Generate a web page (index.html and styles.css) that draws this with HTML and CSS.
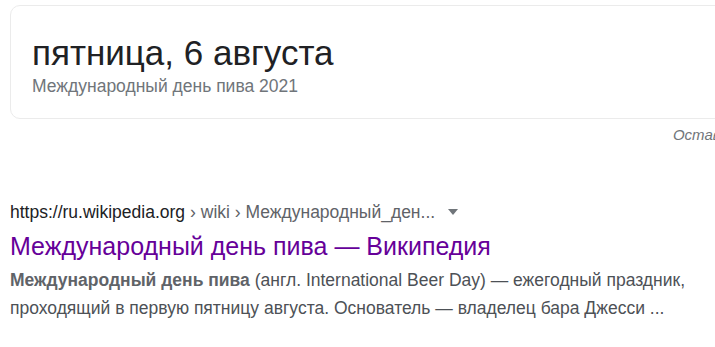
FILE: index.html
```html
<!DOCTYPE html>
<html lang="ru">
<head>
  <meta charset="UTF-8" />
  <title>Международный день пива</title>
  <link rel="stylesheet" href="styles.css">
</head>
<body>
  <div class="page">
    <div class="date-card">
      <div class="date-title">пятница, 6 августа</div>
      <div class="date-sub">Международный день пива 2021</div>
    </div>
    <div class="feedback">Оставить отзыв</div>
  </div>

  <div class="result">
    <div class="result-url">
      <span class="host">https://ru.wikipedia.org</span>
      <span class="crumbs">› wiki › Международный_ден...</span>
      <span class="caret"></span>
    </div>
    <a class="result-title" href="#">Международный день пива — Википедия</a>
    <div class="snippet">
      <b>Международный день пива</b> (англ. International Beer Day) — ежегодный праздник,
      проходящий в первую пятницу августа. Основатель — владелец бара Джесси ...
    </div>
  </div>
</body>
</html>
```

FILE: styles.css
```css
* {
  margin: 0;
  padding: 0;
  box-sizing: border-box;
}

body {
  font-family: 'Liberation Sans', Arial, sans-serif;
  background-color: #ffffff;
  color: #202124;
  overflow: hidden;
}

.page {
  width: 790px;
  margin: 5px 0 0 10px;
}

.date-card {
  border: 1px solid #ebebeb;
  border-radius: 10px;
  height: 114px;
  padding: 26px 0 0 21px;
}

.date-title {
  font-size: 35px;
  line-height: 42px;
  color: #202124;
}

.date-sub {
  font-size: 17.5px;
  line-height: 24px;
  color: #70757a;
}

.feedback {
  text-align: right;
  font-size: 15px;
  font-style: italic;
  color: #70757a;
  margin-top: 7px;
}

.result {
  margin: 57px 0 0 10px;
}

.result-url {
  display: flex;
  align-items: center;
  font-size: 17.5px;
  line-height: 24px;
  color: #5f6368;
}

.host {
  color: #202124;
  margin-right: 5px;
}

.caret {
  width: 0;
  height: 0;
  margin-left: 13px;
  border-left: 5px solid transparent;
  border-right: 5px solid transparent;
  border-top: 6px solid #70757a;
}

.result-title {
  display: block;
  font-size: 25px;
  line-height: 34px;
  color: #660099;
  text-decoration: none;
  margin-top: 5px;
}

.snippet {
  font-size: 17.5px;
  line-height: 27.5px;
  color: #4d5156;
  margin-top: 4px;
}

.snippet b {
  color: #5f6368;
}
```
